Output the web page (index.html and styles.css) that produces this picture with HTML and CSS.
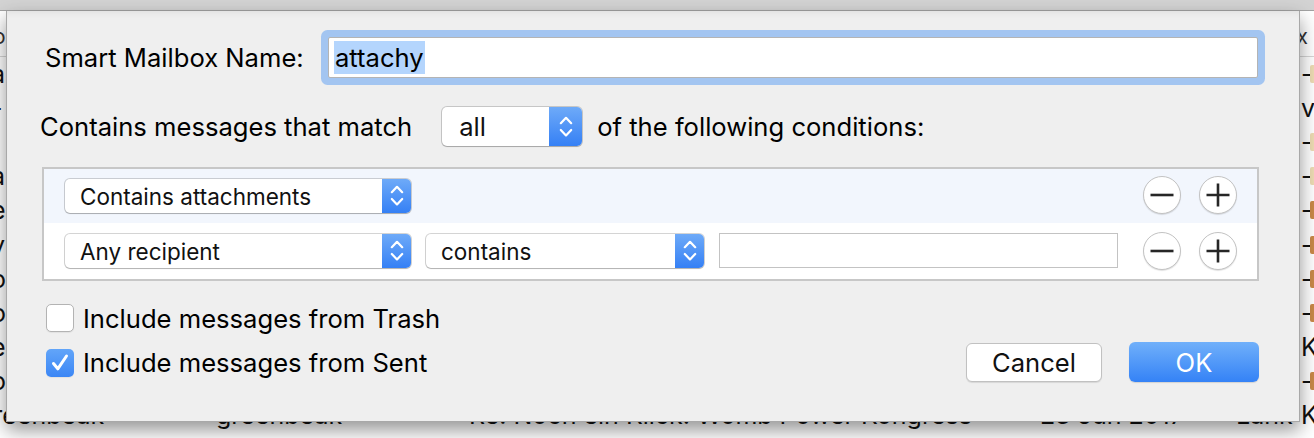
FILE: index.html
```html
<!DOCTYPE html>
<html>
<head>
<meta charset="utf-8">
<link rel="stylesheet" href="styles.css">
</head>
<body>
<div class="screen">
  <div class="toolbar"></div>
  <div class="list">
    <div class="list-head"><span class="head-l">o</span><span class="head-r">x</span></div>
    <div class="row"><span class="c1"><span class="sl">a</span></span><span></span><span></span><span></span><span></span><span class="c6"><b class="dash">-</b><i class="tag light"></i></span></div>
    <div class="row"><span class="c1"><span class="sl">-</span></span><span></span><span></span><span></span><span></span><span class="c6">ve</span></div>
    <div class="row"><span class="c1"><span class="sl or">i</span></span><span></span><span></span><span></span><span></span><span class="c6"><b class="dash">-</b><i class="tag light"></i></span></div>
    <div class="row"><span class="c1"><span class="sl">a</span></span><span></span><span></span><span></span><span></span><span class="c6"><b class="dash">-</b><i class="tag light"></i></span></div>
    <div class="row"><span class="c1"><span class="sl">e</span></span><span></span><span></span><span></span><span></span><span class="c6"><b class="dash">-</b><i class="tag dark"></i></span></div>
    <div class="row"><span class="c1"><span class="sl">y</span></span><span></span><span></span><span></span><span></span><span class="c6"><b class="dash">-</b><i class="tag dark"></i></span></div>
    <div class="row"><span class="c1"><span class="sl">o</span></span><span></span><span></span><span></span><span></span><span class="c6"><b class="dash">-</b><i class="tag dark"></i></span></div>
    <div class="row"><span class="c1"><span class="sl">o</span></span><span></span><span></span><span></span><span></span><span class="c6"><b class="dash">-</b><i class="tag dark"></i></span></div>
    <div class="row"><span class="c1"><span class="sl">e</span></span><span></span><span></span><span></span><span></span><span class="c6">K</span></div>
    <div class="row"><span class="c1"><span class="sl">o</span></span><span></span><span></span><span></span><span></span><span class="c6"><b class="dash">-</b><i class="tag dark"></i></span></div>
    <div class="row"><span class="c1">greenbeak</span><span>greenbeak</span><span>Re: Noch ein Klick: Womb Power Kongress</span><span>23 Jun 2017</span><span>Lank</span><span class="c6">K</span></div>
  </div>

  <div class="sheet">
    <div class="name-row">
      <label class="name-label">Smart Mailbox Name:</label>
      <div class="name-field"><span class="sel">attachy</span></div>
    </div>

    <div class="match-row">
      <span class="match-label">Contains messages that match</span>
      <div class="popup popup-all">
        <span class="popup-text">all</span>
        <span class="popup-arrows"><svg width="14" height="24" viewBox="0 0 14 24"><path d="M1.8 8.2 L7 2.8 L12.2 8.2 M1.8 15 L7 20.4 L12.2 15" fill="none" stroke="#fff" stroke-width="2.2" stroke-linecap="round" stroke-linejoin="round"/></svg></span>
      </div>
      <span class="match-tail">of the following conditions:</span>
    </div>

    <div class="conditions">
      <div class="cond cond-alt">
        <div class="popup popup-wide">
          <span class="popup-text">Contains attachments</span>
          <span class="popup-arrows"><svg width="14" height="24" viewBox="0 0 14 24"><path d="M1.8 8.2 L7 2.8 L12.2 8.2 M1.8 15 L7 20.4 L12.2 15" fill="none" stroke="#fff" stroke-width="2.2" stroke-linecap="round" stroke-linejoin="round"/></svg></span>
        </div>
        <div class="pm">
          <span class="circle"><svg width="24" height="24" viewBox="0 0 24 24"><path d="M0.5 12 H23.5" stroke="#262626" stroke-width="2.6"/></svg></span>
          <span class="circle"><svg width="24" height="24" viewBox="0 0 24 24"><path d="M0.5 12 H23.5 M12 0.5 V23.5" stroke="#262626" stroke-width="2.6"/></svg></span>
        </div>
      </div>
      <div class="cond">
        <div class="popup popup-wide">
          <span class="popup-text">Any recipient</span>
          <span class="popup-arrows"><svg width="14" height="24" viewBox="0 0 14 24"><path d="M1.8 8.2 L7 2.8 L12.2 8.2 M1.8 15 L7 20.4 L12.2 15" fill="none" stroke="#fff" stroke-width="2.2" stroke-linecap="round" stroke-linejoin="round"/></svg></span>
        </div>
        <div class="popup popup-mid">
          <span class="popup-text">contains</span>
          <span class="popup-arrows"><svg width="14" height="24" viewBox="0 0 14 24"><path d="M1.8 8.2 L7 2.8 L12.2 8.2 M1.8 15 L7 20.4 L12.2 15" fill="none" stroke="#fff" stroke-width="2.2" stroke-linecap="round" stroke-linejoin="round"/></svg></span>
        </div>
        <div class="value-field"></div>
        <div class="pm">
          <span class="circle"><svg width="24" height="24" viewBox="0 0 24 24"><path d="M0.5 12 H23.5" stroke="#262626" stroke-width="2.6"/></svg></span>
          <span class="circle"><svg width="24" height="24" viewBox="0 0 24 24"><path d="M0.5 12 H23.5 M12 0.5 V23.5" stroke="#262626" stroke-width="2.6"/></svg></span>
        </div>
      </div>
    </div>

    <div class="footer">
      <div class="checks">
        <div class="check-row"><span class="cb"></span><span class="check-label">Include messages from Trash</span></div>
        <div class="check-row"><span class="cb on"><svg width="28" height="28" viewBox="0 0 28 28"><path d="M7.5 14.5 L11.8 19.8 L20.5 7" fill="none" stroke="#fff" stroke-width="3" stroke-linecap="round" stroke-linejoin="round"/></svg></span><span class="check-label">Include messages from Sent</span></div>
      </div>
      <div class="buttons">
        <button class="btn">Cancel</button>
        <button class="btn btn-primary">OK</button>
      </div>
    </div>
  </div>
</div>
</body>
</html>
```

FILE: styles.css
```css
* { box-sizing: border-box; }
html, body { margin: 0; padding: 0; }
body {
  width: 1314px;
  height: 438px;
  overflow: hidden;
  background: #fff;
  font-family: Inter, "Liberation Sans", sans-serif;
}
.screen {
  position: relative;
  width: 1314px;
  height: 438px;
  overflow: hidden;
  background: #fff;
}
.toolbar {
  height: 11px;
  background: #d3d3d3;
  border-bottom: 1px solid #a2a2a2;
}

/* background message list */
.list {
  font-size: 25px;
  color: #111;
}
.list-head {
  height: 46px;
  border-bottom: 1px solid #d6d6d6;
  display: flex;
  justify-content: space-between;
  align-items: center;
  font-size: 21px;
  color: #333;
  padding-top: 6px;
}
.head-l { margin-left: -7px; }
.head-r { margin-right: 6px; }
.row {
  height: 34.1px;
  display: grid;
  grid-template-columns: 238px 253px 571px 196px 64px 1fr;
  margin-left: -22px;
  width: 1336px;
  align-items: center;
  white-space: nowrap;
  overflow: hidden;
}
.row > span { overflow: hidden; }
.sl { padding-left: 13px; }
.or { color: #b0601b; }
.c6 { display: flex; align-items: center; padding-left: 1px; }
.dash {
  font-weight: normal;
  flex: 0 0 9px;
  width: 9px;
  overflow: hidden;
}
.tag {
  display: inline-block;
  flex: 0 0 10px;
  width: 10px;
  height: 18px;
  border-radius: 2px;
}
.tag.light { background: #eedcb4; }
.tag.dark { background: #c98948; }

/* sheet */
.sheet {
  position: absolute;
  left: 6px;
  top: 11px;
  width: 1294px;
  height: 411px;
  background: #efefef;
  border: 1px solid #a8a8a8;
  border-top: none;
  box-shadow: 0 8px 18px rgba(0, 0, 0, 0.42), inset 0 6px 6px -4px rgba(0, 0, 0, 0.06);
  padding: 19px 40px 0 33px;
  display: flex;
  flex-direction: column;
  font-size: 25.6px;
  color: #000;
}

.name-row {
  height: 55px;
  display: flex;
  align-items: center;
}
.name-label {
  flex: 0 0 283px;
  margin-left: 5px;
}
.name-field {
  flex: 1;
  height: 41px;
  margin-right: 1px;
  background: #fff;
  border: 1px solid #b4b4b4;
  border-radius: 2px;
  box-shadow: 0 0 0 7px #a3c5f1;
  display: flex;
  align-items: center;
  padding-left: 5px;
}
.sel {
  background: #b4d5fd;
  line-height: 33px;
  height: 33px;
  padding: 0 1px;
}

.match-row {
  margin-top: 22px;
  height: 39px;
  display: flex;
  align-items: center;
}
.popup {
  display: flex;
  align-items: stretch;
  height: 34px;
  background: #fff;
  border-radius: 5px;
  box-shadow: 0 0 0 1px rgba(0, 0, 0, 0.17), 0 1px 1px rgba(0, 0, 0, 0.16);
  font-size: 22.5px;
  color: #111;
}
.popup-text {
  flex: 1;
  display: flex;
  align-items: center;
  padding-left: 15px;
}
.popup-arrows {
  width: 29px;
  display: flex;
  align-items: center;
  justify-content: center;
  border-radius: 0 5px 5px 0;
  background: linear-gradient(#6eaaf8, #3580f5);
}
.popup-all {
  width: 140px;
  height: 39px;
  margin-left: 30px;
  margin-right: 15px;
  font-size: 25.6px;
}
.popup-all .popup-text { padding-left: 17px; }
.popup-all .popup-arrows { width: 33px; }
.popup-wide { width: 346px; }
.popup-mid { width: 278px; margin-left: 15px; }

.conditions {
  margin-top: 21px;
  margin-left: 2px;
  height: 114px;
  border: 2px solid #c7c7c7;
  background: #fff;
  display: flex;
  flex-direction: column;
}
.cond {
  height: 56px;
  display: flex;
  align-items: center;
  padding: 0 20px 0 21px;
}
.cond-alt {
  height: 54px;
  background: #f2f6fd;
}
.value-field {
  width: 399px;
  height: 35px;
  margin-left: 15px;
  margin-top: -2px;
  background: #fff;
  border: 1px solid #c3c3c3;
}
.pm {
  margin-left: auto;
  display: flex;
  gap: 18px;
}
.circle {
  width: 38px;
  height: 38px;
  border-radius: 50%;
  background: #fff;
  border: 1px solid #c3c3c3;
  box-shadow: 0 1px 1px rgba(0, 0, 0, 0.12);
  display: flex;
  align-items: center;
  justify-content: center;
}
.cond-alt .pm { margin-top: -3px; }

.footer {
  margin-top: 17.5px;
  display: flex;
  justify-content: space-between;
  align-items: flex-end;
}
.checks {
  display: flex;
  flex-direction: column;
  gap: 5.5px;
  padding-left: 6px;
}
.check-row {
  height: 39px;
  display: flex;
  align-items: center;
}
.cb {
  width: 28px;
  height: 28px;
  border-radius: 5px;
  background: #fff;
  border: 1px solid #b3b3b3;
  box-shadow: 0 1px 1px rgba(0, 0, 0, 0.06);
  display: flex;
}
.cb.on {
  border: none;
  background: linear-gradient(#62a5f9, #3b86f5);
}
.check-label { margin-left: 9px; }

.buttons {
  display: flex;
  align-items: center;
  gap: 27px;
}
.btn {
  font-family: inherit;
  font-size: 25.6px;
  color: #111;
  width: 136px;
  height: 39px;
  border-radius: 6px;
  background: #fff;
  border: 1px solid #c1c1c1;
  box-shadow: 0 1px 1px rgba(0, 0, 0, 0.1);
  padding: 0;
}
.btn-primary {
  width: 130px;
  height: 40px;
  border: none;
  color: #fff;
  background: linear-gradient(#70b0fa, #3482f6);
  box-shadow: 0 1px 1px rgba(0, 0, 0, 0.12);
}
```
